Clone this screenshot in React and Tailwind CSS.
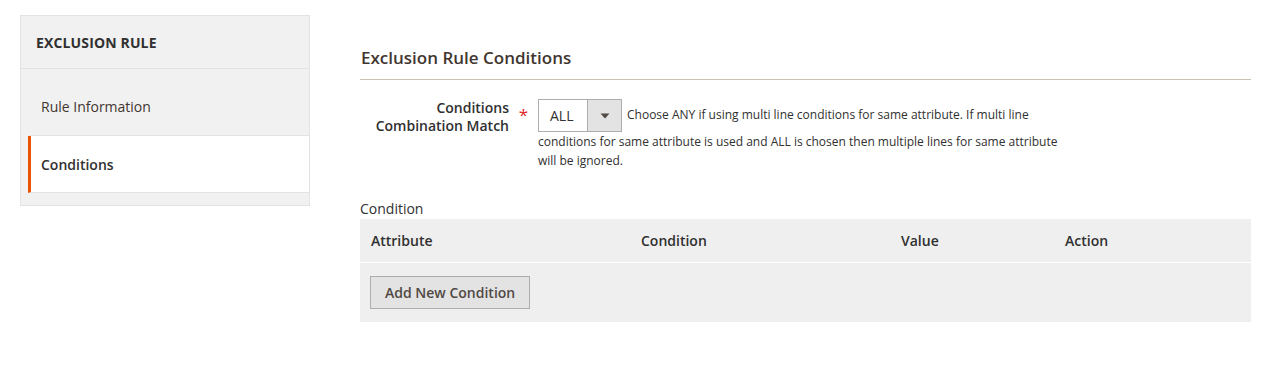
export default function App() {
  return (
    <div className="flex items-start gap-[50px] bg-white pl-5 pr-[35px] pt-[15px] text-[#303030] h-[382px]" style={{ fontFamily: '"Open Sans", "Liberation Sans", sans-serif' }}>
      {/* side nav */}
      <div className="w-[290px] shrink-0 border border-[#e3e3e3] bg-[#f1f1f1] pb-3">
        <div className="border-b border-[#e3e3e3] px-[15px] h-[53px] flex items-center pt-px">
          <span className="text-[14px] font-bold uppercase text-[#303030] tracking-[0.01em]">Exclusion Rule</span>
        </div>
        <div className="ml-[7px] border-l-[3px] border-transparent border-b border-b-[#e3e3e3] h-[67px] flex items-center pl-[10px] pt-[9px]">
          <span className="text-[14px] text-[#41362f]">Rule Information</span>
        </div>
        <div className="ml-[7px] border-l-[3px] border-l-[#eb5202] border-b border-b-[#e3e3e3] bg-white h-[57px] flex items-center pl-[10px]">
          <span className="text-[14px] font-semibold text-[#303030]">Conditions</span>
        </div>
      </div>

      {/* main */}
      <div className="flex-1 min-w-0">
        <div className="mt-[31px] border-b border-[#cac3b4] pb-[9px]">
          <h2 className="text-[17px] font-semibold text-[#41362f] leading-[24px] pl-px">Exclusion Rule Conditions</h2>
        </div>

        <div className="flex mt-[18px]">
          <div className="w-[149px] shrink-0 text-right text-[14px] font-semibold text-[#303030] leading-[18px] pt-[1px]">
            Conditions<br />Combination Match
          </div>
          <div className="w-[29px] shrink-0 flex justify-center pt-[8px]">
            <span className="text-[#e22626] text-[17px] leading-none">*</span>
          </div>
          <div className="w-[530px] text-[12px] leading-[19px] text-[#303030] pt-[1px]">
            <span className="inline-flex align-middle h-[33px] border border-[#adadad] bg-white mr-[5px]">
              <span className="w-[48px] flex items-center pl-[11px] text-[14px] text-[#303030]">ALL</span>
              <span className="w-[34px] flex items-center justify-center bg-[#e3e3e3] border-l border-[#adadad]">
                <svg width="10" height="6" viewBox="0 0 10 6"><path d="M0.5 0.5 L9.5 0.5 L5 5.5 Z" fill="#514943" /></svg>
              </span>
            </span>
            Choose ANY if using multi line conditions for same attribute. If multi line conditions for same attribute is used and ALL is chosen then multiple lines for same attribute will be ignored.
          </div>
        </div>

        <div className="mt-[30px] text-[14px] leading-[18px] text-[#303030]">Condition</div>
        <div className="bg-[#efefef] mt-[1px]">
          <div className="flex h-[44px] items-center border-b border-white text-[14px] font-semibold text-[#303030]">
            <div className="w-[271px] pl-[11px]">Attribute</div>
            <div className="w-[260px] pl-[10px]">Condition</div>
            <div className="w-[164px] pl-[10px]">Value</div>
            <div className="flex-1 pl-[10px]">Action</div>
          </div>
          <div className="h-[59px] flex items-start pl-[10px] pt-[13px]">
            <button className="h-[33px] px-[14px] border border-[#adadad] bg-[#e3e3e3] text-[14px] font-semibold text-[#514943]">Add New Condition</button>
          </div>
        </div>
      </div>
    </div>
  );
}
